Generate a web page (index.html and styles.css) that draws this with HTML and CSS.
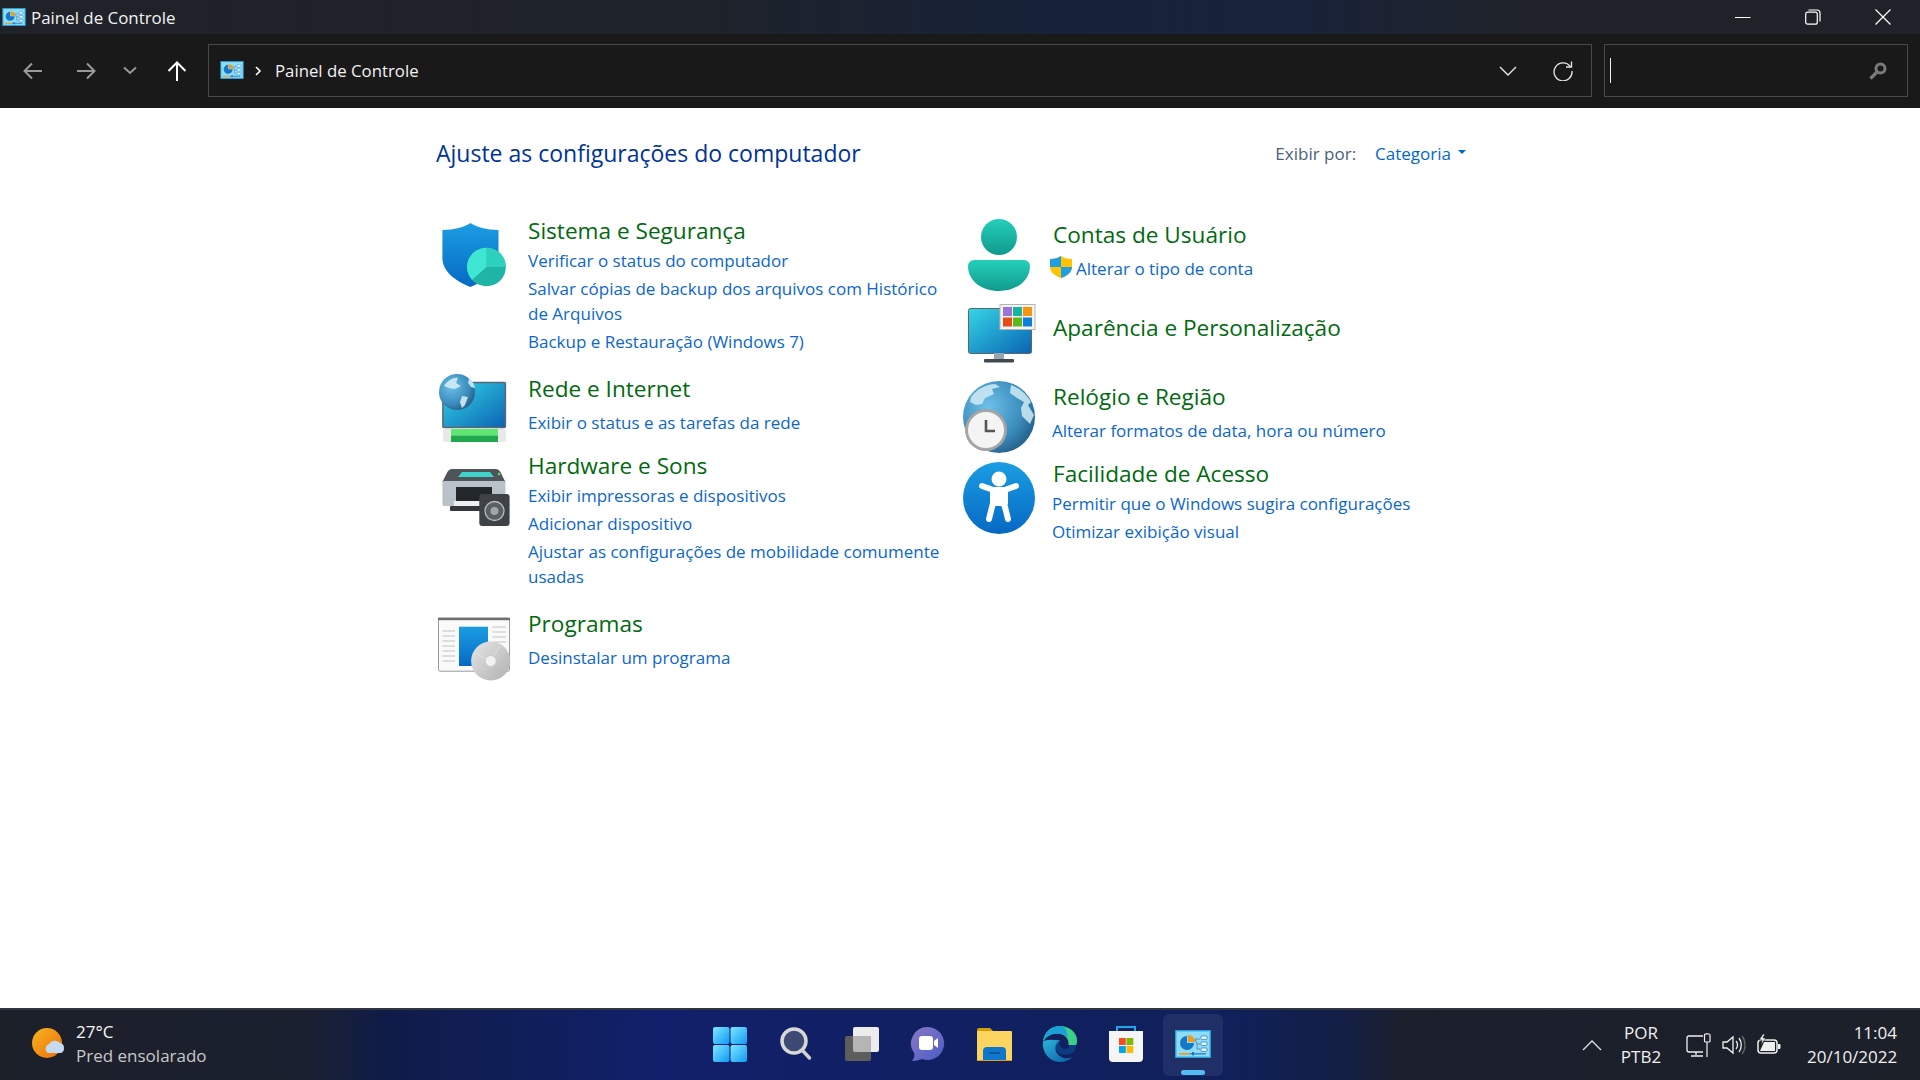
FILE: index.html
```html
<!DOCTYPE html>
<html lang="pt-BR">
<head>
<meta charset="utf-8">
<title>Painel de Controle</title>
<link rel="stylesheet" href="styles.css">
</head>
<body>
<svg class="defs" aria-hidden="true">
  <defs>
    <linearGradient id="blueV" x1="0" y1="0" x2="0" y2="1"><stop offset="0" stop-color="#1b9de2"/><stop offset="1" stop-color="#0669c4"/></linearGradient>
    <linearGradient id="screen" x1="0" y1="0" x2="1" y2="1"><stop offset="0" stop-color="#35d6e6"/><stop offset="1" stop-color="#0a63b4"/></linearGradient>
    <linearGradient id="teal" x1="0" y1="0" x2="0" y2="1"><stop offset="0" stop-color="#25d0bb"/><stop offset="1" stop-color="#0f9a8c"/></linearGradient>
    <radialGradient id="globe" cx=".35" cy=".35" r=".8"><stop offset="0" stop-color="#6cc0e8"/><stop offset=".6" stop-color="#3a8cbc"/><stop offset="1" stop-color="#1d4f78"/></radialGradient>
    <linearGradient id="cdg" x1="0" y1="0" x2="1" y2="1"><stop offset="0" stop-color="#e6e6e6"/><stop offset="1" stop-color="#b0b0b0"/></linearGradient>
    <linearGradient id="winG" x1="0" y1="0" x2="1" y2="1"><stop offset="0" stop-color="#7fe7ff"/><stop offset="1" stop-color="#0e9af5"/></linearGradient>
    <linearGradient id="chatG" x1="0" y1="0" x2="1" y2="1"><stop offset="0" stop-color="#8a78c8"/><stop offset="1" stop-color="#4a5cc4"/></linearGradient>
    <linearGradient id="edgeG" x1="0" y1="0" x2="1" y2="1"><stop offset="0" stop-color="#2ab6d8"/><stop offset="1" stop-color="#0d5aa8"/></linearGradient>
    <linearGradient id="sunG" x1="0" y1="0" x2="1" y2="1"><stop offset="0" stop-color="#f5b81f"/><stop offset="1" stop-color="#ee6c0c"/></linearGradient>
    <symbol id="cp" viewBox="0 0 36 28">
      <rect x=".5" y=".5" width="35" height="27" fill="#5cc8ef" stroke="#2b9fd8"/>
      <rect x="2" y="2" width="32" height="24" fill="#8edcf5"/>
      <path d="M13 12V5a7 7 0 0 1 7 7z" fill="#f09a1a"/>
      <path d="M12 6a7 7 0 1 0 7 7h-7z" fill="#1577c8"/>
      <path d="M20 9h5M20 9l2 5h3M22 14v5h3" fill="none" stroke="#4a7fa8" stroke-width=".8"/>
      <rect x="26" y="6" width="6" height="3.4" rx=".8" fill="#fff" stroke="#1f7fc8" stroke-width=".8"/>
      <rect x="26" y="12" width="6" height="3.4" rx=".8" fill="#fff" stroke="#1f7fc8" stroke-width=".8"/>
      <rect x="26" y="18" width="6" height="3.4" rx=".8" fill="#fff" stroke="#1f7fc8" stroke-width=".8"/>
      <rect x="4" y="23" width="11" height="1.6" fill="#f09a1a"/>
      <rect x="15" y="23" width="16" height="1.6" fill="#3a8fca"/>
      <rect x="17" y="22" width="2" height="3.4" fill="#1577c8"/>
    </symbol>
  </defs>
</svg>

<header class="titlebar">
  <svg class="tb-icon"><use href="#cp"/></svg>
  <span class="tb-title">Painel de Controle</span>
  <div class="win-controls">
    <svg class="wc" viewBox="0 0 16 16"><path d="M0 8.500h15.500" stroke="#fff" stroke-width="1" fill="none"/></svg>
    <svg class="wc" viewBox="0 0 16 16"><rect x=".7" y="3.200" width="11.600" height="12" rx="2" fill="none" stroke="#fff" stroke-width="1.200"/><path d="M3.500 1h8.500a3 3 0 0 1 3 3v8.500" fill="none" stroke="#fff" stroke-width="1.200"/></svg>
    <svg class="wc" viewBox="0 0 16 16"><path d="M.5.5l15 15M15.500.5l-15 15" stroke="#fff" stroke-width="1.200" fill="none"/></svg>
  </div>
</header>

<nav class="toolbar">
  <div class="nav-btns">
    <svg class="nav nav-back" viewBox="0 0 20 18"><path d="M19 9H2M9 1.500L1.500 9 9 16.500" fill="none" stroke="#9a9a9a" stroke-width="2"/></svg>
    <svg class="nav nav-fwd" viewBox="0 0 20 18"><path d="M1 9h17M11 1.500L18.500 9 11 16.500" fill="none" stroke="#9a9a9a" stroke-width="2"/></svg>
    <svg class="nav nav-more" viewBox="0 0 14 9"><path d="M1 1.500l6 5.500 6-5.500" fill="none" stroke="#9a9a9a" stroke-width="2"/></svg>
    <svg class="nav nav-up" viewBox="0 0 20 20"><path d="M10 20V2M1.500 10L10 1.500 18.500 10" fill="none" stroke="#fff" stroke-width="2"/></svg>
  </div>
  <div class="address">
    <svg class="addr-icon"><use href="#cp"/></svg>
    <svg class="addr-sep" viewBox="0 0 7 10"><path d="M1 1l4 4-4 4" fill="none" stroke="#fff" stroke-width="1.600"/></svg>
    <span class="addr-text">Painel de Controle</span>
    <svg class="addr-drop" viewBox="0 0 18 10"><path d="M1 1l8 8 8-8" fill="none" stroke="#e6e6e6" stroke-width="1.400"/></svg>
    <svg class="addr-refresh" viewBox="0 0 20 20"><path d="M17.300 5.500A9 9 0 1 0 19 10" fill="none" stroke="#e6e6e6" stroke-width="1.300"/><path d="M18.500 .5v5.500h-5.500" fill="none" stroke="#e6e6e6" stroke-width="1.300"/></svg>
  </div>
  <div class="search">
    <span class="caret"></span>
    <svg class="search-icon" viewBox="0 0 18 18"><circle cx="11.500" cy="6.500" r="4.500" fill="none" stroke="#7a7a7a" stroke-width="3"/><path d="M8 10l-6.500 6.500" stroke="#7a7a7a" stroke-width="3.200"/></svg>
  </div>
</nav>

<main class="content">
  <div class="head-row">
    <h1 class="page-title">Ajuste as configurações do computador</h1>
    <div class="view-by">
      <span class="view-label">Exibir por:</span>
      <a class="view-value">Categoria</a>
      <span class="view-arrow"></span>
    </div>
  </div>

  <div class="columns">
    <div class="col col-left">
      <section class="item h-sistema">
        <svg class="icon i-sistema" viewBox="0 0 72 72">
          <path d="M34.500 3c6 4 16 7 28 7v28c0 13-13 23-28 29C19 61 6.400 51 6.400 38V10c12 0 22-3 28.100-7z" fill="url(#blueV)"/>
          <circle cx="50.500" cy="47" r="19.300" fill="#1fb5a6"/>
          <path d="M50.500 47V27.700A19.300 19.300 0 0 1 69.800 47z" fill="#2dd0bc"/>
          <path d="M50.500 47V27.700A19.300 19.300 0 0 0 36 60z" fill="#40e6d4"/>
        </svg>
        <div class="body">
          <h2 class="title">Sistema e Segurança</h2>
          <a class="link">Verificar o status do computador</a>
          <a class="link">Salvar cópias de backup dos arquivos com Histórico de Arquivos</a>
          <a class="link">Backup e Restauração (Windows 7)</a>
        </div>
      </section>

      <section class="item h-rede">
        <svg class="icon i-rede" viewBox="0 0 72 72">
          <rect x="6.900" y="10.500" width="62.500" height="45" rx="1" fill="url(#screen)" stroke="#5b6670" stroke-width="1.500"/>
          <rect x="7" y="57" width="63" height="13" rx="2" fill="#e8e8e8"/>
          <rect x="15" y="57" width="47" height="6.500" fill="#5fe870"/>
          <rect x="15" y="63.500" width="47" height="6.500" fill="#1fa84c"/>
          <circle cx="21" cy="20" r="18" fill="url(#globe)"/>
          <path d="M8 14c4-6 10-9 14-8l-2 5 5 3-6 3-6-1zM26 24l6 1-3 8-3 3-2-6zM33 6c3 2 5 6 6 10l-4-1-3-4z" fill="#d3ebf5" opacity=".9"/>
        </svg>
        <div class="body">
          <h2 class="title">Rede e Internet</h2>
          <a class="link first-far">Exibir o status e as tarefas da rede</a>
        </div>
      </section>

      <section class="item h-hardware">
        <svg class="icon i-hardware" viewBox="0 0 72 72">
          <path d="M6.400 26l5-10a6 6 0 0 1 4-3h45a6 6 0 0 1 4 3l5 10z" fill="#4e5459"/>
          <path d="M22 21l4-5h28l4 5z" fill="#3fd4cc"/>
          <rect x="6.400" y="25" width="63" height="25" rx="2" fill="#b9c1c9"/>
          <circle cx="63" cy="18" r="1.300" fill="#4be07a"/>
          <rect x="20" y="31" width="36" height="14" fill="#23272b"/>
          <rect x="18" y="45" width="34" height="6" fill="#eceff1"/>
          <rect x="14" y="50" width="36" height="5" rx="1" fill="#33373b"/>
          <rect x="43.300" y="38" width="30.300" height="32" rx="3" fill="#3e4145"/>
          <circle cx="58.500" cy="55" r="9.500" fill="#5a5f64" stroke="#b5babd" stroke-width="1.300"/>
          <circle cx="58.500" cy="55" r="4" fill="#a0a6aa"/>
        </svg>
        <div class="body">
          <h2 class="title">Hardware e Sons</h2>
          <a class="link">Exibir impressoras e dispositivos</a>
          <a class="link">Adicionar dispositivo</a>
          <a class="link">Ajustar as configurações de mobilidade comumente usadas</a>
        </div>
      </section>

      <section class="item h-programas">
        <svg class="icon i-programas" viewBox="0 0 72 72">
          <rect x="2.500" y="5.200" width="71" height="53" rx="1.500" fill="#fafafa" stroke="#9a9a9a"/>
          <rect x="2" y="4.700" width="72" height="2.500" fill="#6f6f6f"/>
          <path d="M6.400 18h12.600M6.400 23h12.600M6.400 28h12.600M6.400 33h12.600M6.400 38h12.600M6.400 43h12.600M6.400 48h12.600M56.400 14h13.600M56.400 19h13.600M56.400 24h13.600M56.400 29h13.600" stroke="#c2c2c2" stroke-width="1"/>
          <rect x="23" y="13.700" width="29" height="39.300" fill="url(#blueV)"/>
          <circle cx="54.700" cy="48" r="19.600" fill="url(#cdg)"/>
          <circle cx="54.700" cy="48" r="5.500" fill="#f2f2f2" stroke="#c9c9c9"/>
          <path d="M39 40l11 6M64 33l-7 11" stroke="#e8d8f0" stroke-width="1"/>
        </svg>
        <div class="body">
          <h2 class="title">Programas</h2>
          <a class="link first-far">Desinstalar um programa</a>
        </div>
      </section>
    </div>

    <div class="col col-right">
      <section class="item h-contas">
        <svg class="icon i-contas" viewBox="0 0 72 72">
          <circle cx="36" cy="18" r="18" fill="url(#teal)"/>
          <path d="M11 41h50a6 6 0 0 1 6 6c0 15-14 25-31 25S5 62 5 47a6 6 0 0 1 6-6z" fill="url(#teal)"/>
        </svg>
        <div class="body">
          <h2 class="title">Contas de Usuário</h2>
          <a class="link first-far with-shield">
            <svg class="uac" viewBox="0 0 22 22">
              <path d="M11 0c3 2 6 3 11 3v8c0 5-5 9-11 11C5 20 0 16 0 11V3c5 0 8-1 11-3z" fill="#ffc400"/>
              <path d="M11 0c-3 2-6 3-11 3v8h11z" fill="#1e9fe4"/>
              <path d="M11 11h11c0 5-5 9-11 11z" fill="#1e9fe4"/>
            </svg>Alterar o tipo de conta</a>
        </div>
      </section>

      <section class="item h-aparencia">
        <svg class="icon i-aparencia" viewBox="0 0 72 72">
          <rect x="5.500" y="10.500" width="63" height="45" rx="2" fill="url(#screen)" stroke="#5b6670"/>
          <rect x="31" y="55" width="10" height="7" fill="#9aa4ab"/>
          <rect x="21" y="61" width="30" height="3.500" rx="1" fill="#3f4a52"/>
          <rect x="37" y="6.500" width="35" height="25" fill="#f4f4f4" stroke="#b5b5b5"/>
          <rect x="40" y="9" width="9" height="9" fill="#9b72d8"/>
          <rect x="50" y="9" width="9" height="9" fill="#17b3a3"/>
          <rect x="60" y="9" width="9" height="9" fill="#f59510"/>
          <rect x="40" y="19.500" width="9" height="9" fill="#e64c18"/>
          <rect x="50" y="19.500" width="9" height="9" fill="#5cb81a"/>
          <rect x="60" y="19.500" width="9" height="9" fill="#0c80d8"/>
        </svg>
        <div class="body">
          <h2 class="title">Aparência e Personalização</h2>
        </div>
      </section>

      <section class="item h-relogio">
        <svg class="icon i-relogio" viewBox="0 0 72 72">
          <circle cx="36" cy="36" r="36" fill="url(#globe)"/>
          <path d="M8 16c6-8 16-13 24-13l5 3-8 2 2 5-9 4-3 6-6 1-6-3zM48 4c8 3 16 9 20 17l-3 3 6 10-4 9-8-8-1-8 3-6-7-4-7-5z" fill="#d0ebf5" opacity=".85"/>
          <circle cx="23" cy="49" r="21" fill="#a5a5a5"/>
          <circle cx="23" cy="49" r="18" fill="#f4f4f4"/>
          <path d="M23 39v11h9" fill="none" stroke="#555" stroke-width="2.600"/>
        </svg>
        <div class="body">
          <h2 class="title">Relógio e Região</h2>
          <a class="link first-far">Alterar formatos de data, hora ou número</a>
        </div>
      </section>

      <section class="item h-facilidade">
        <svg class="icon i-facilidade" viewBox="0 0 72 72">
          <circle cx="36" cy="36" r="36" fill="url(#blueV)"/>
          <circle cx="36" cy="17" r="7.500" fill="#fff"/>
          <path d="M19 24l17 6 17-6" fill="none" stroke="#fff" stroke-width="6" stroke-linecap="round" stroke-linejoin="round"/>
          <path d="M30 28h12v13l-1 0 4 16M30 28v13l-4 16" fill="#fff" stroke="#fff" stroke-width="6" stroke-linecap="round" stroke-linejoin="round"/>
          <rect x="30" y="28" width="12" height="16" fill="#fff"/>
        </svg>
        <div class="body">
          <h2 class="title">Facilidade de Acesso</h2>
          <a class="link">Permitir que o Windows sugira configurações</a>
          <a class="link">Otimizar exibição visual</a>
        </div>
      </section>
    </div>
  </div>
</main>

<footer class="taskbar">
  <div class="weather">
    <svg class="sun" viewBox="0 0 34 32">
      <circle cx="15" cy="15" r="15" fill="url(#sunG)"/>
      <path d="M16 25a5 5 0 0 1 1-9 7 7 0 0 1 11-1 5 5 0 0 1 4 5 5 5 0 0 1-3 5z" fill="#c5d9f0"/>
    </svg>
    <div class="weather-text">
      <div class="temp">27°C</div>
      <div class="cond">Pred ensolarado</div>
    </div>
  </div>
  <div class="apps">
    <div class="app"><svg class="ico" viewBox="0 0 34 36">
      <rect x="0" y="1" width="16.500" height="17" rx="2" fill="url(#winG)"/><rect x="17.500" y="1" width="16.500" height="17" rx="2" fill="url(#winG)"/>
      <rect x="0" y="19" width="16.500" height="17" rx="2" fill="url(#winG)"/><rect x="17.500" y="19" width="16.500" height="17" rx="2" fill="url(#winG)"/></svg></div>
    <div class="app"><svg class="ico" viewBox="0 0 34 36">
      <circle cx="15" cy="15" r="12" fill="#3e4a74" stroke="#d8d8d8" stroke-width="3.500"/><path d="M23.500 24.500l7 7.500" stroke="#d0d0d0" stroke-width="3.500" stroke-linecap="round"/></svg></div>
    <div class="app"><svg class="ico" viewBox="0 0 36 36">
      <rect x="9" y="1" width="26" height="25" rx="2" fill="#ececec"/>
      <rect x="1" y="10" width="26" height="25" rx="2" fill="#5d5d5d"/>
      <path d="M9 10h18v16H11a2 2 0 0 1-2-2z" fill="#b5b5b5"/></svg></div>
    <div class="app"><svg class="ico" viewBox="0 0 34 36">
      <path d="M17 1a16.500 16.500 0 1 1-6 32c-3 1-6 2-10 2 2-3 3-5 2-8A16.500 16.500 0 0 1 17 1z" fill="url(#chatG)"/>
      <rect x="8" y="10" width="14" height="14" rx="3" fill="#fff"/><path d="M23 15l4-3v10l-4-3z" fill="#fff"/></svg></div>
    <div class="app"><svg class="ico" viewBox="0 0 36 36">
      <path d="M1 4a2 2 0 0 1 2-2h11l4 4H1z" fill="#d89c08"/>
      <rect x="1" y="5" width="35" height="30" rx="1" fill="#fcd561"/>
      <path d="M7 35V25a4 4 0 0 1 4-4h15a4 4 0 0 1 4 4v10z" fill="#0f78cc"/>
      <path d="M13 27h11" stroke="#0a4f90" stroke-width="1.500"/>
      <path d="M1 34h35v1H1z" fill="#e0a010"/></svg></div>
    <div class="app"><svg class="ico" viewBox="0 0 36 38">
      <path d="M18 0C8 0 1 7 0 17c3-6 9-9 15-9 8 0 13 6 12 12h8c1-2 1-3 1-5C36 7 28 0 18 0z" fill="#3ccf8a"/>
      <path d="M18 0C8 0 1 7 0 17c3-6 9-9 15-9 5 0 9 2 11 5C26 5 23 0 18 0z" fill="#1a9fd8"/>
      <path d="M0 17c-1 11 7 21 18 21 5 0 10-2 13-5-6 2-13 1-16-4-3-4-2-9 2-12 1-1 1-2 0-2C9 14 2 14 0 17z" fill="url(#edgeG)"/>
      <path d="M17 15c-4 3-5 8-2 12 3 4 10 4 15 2 4-2 5-5 5-9h-7c0 3-2 4-5 4-4 0-6-4-6-9z" fill="#0c4f98" opacity=".6"/></svg></div>
    <div class="app"><svg class="ico" viewBox="0 0 34 36">
      <path d="M8 6V1h18v5" fill="none" stroke="#1aa8e8" stroke-width="2"/>
      <path d="M0 5h34v27a4 4 0 0 1-4 4H4a4 4 0 0 1-4-4z" fill="#f5f5f5"/>
      <rect x="10" y="12" width="6.800" height="7" fill="#f25022"/><rect x="17.500" y="12" width="6.800" height="7" fill="#7fba00"/>
      <rect x="10" y="20" width="6.800" height="7" fill="#00a4ef"/><rect x="17.500" y="20" width="6.800" height="7" fill="#ffb900"/></svg></div>
    <div class="app app-active"><svg class="ico ico-cp"><use href="#cp"/></svg><span class="indicator"></span></div>
  </div>
  <div class="tray">
    <svg class="up-chev" viewBox="0 0 20 11"><path d="M1 10l9-9 9 9" fill="none" stroke="#e0e0e0" stroke-width="1.300"/></svg>
    <div class="lang"><div>POR</div><div>PTB2</div></div>
    <div class="tray-icons">
      <svg class="ti ti-net" viewBox="0 0 25 25"><path d="M17 3H3a2 2 0 0 0-2 2v12a2 2 0 0 0 2 2h14M10 19v3M5 23h12" fill="none" stroke="#f0f0f0" stroke-width="1.300"/><rect x="18.500" y="1" width="5.500" height="8" rx="1" fill="none" stroke="#f0f0f0" stroke-width="1.200"/><path d="M21 0v1M21 9v15" stroke="#f0f0f0" stroke-width="1.200"/></svg>
      <svg class="ti ti-vol" viewBox="0 0 24 20"><path d="M1 7h4l6-5v16l-6-5H1z" fill="none" stroke="#f0f0f0" stroke-width="1.300"/><path d="M14 6c2 2 2 6 0 8" fill="none" stroke="#f0f0f0" stroke-width="1.300"/><path d="M17 3c3 4 3 10 0 14" fill="none" stroke="#f0f0f0" stroke-width="1.300"/><path d="M20 1c4 5 4 13 0 18" fill="none" stroke="#666" stroke-width="1.300"/></svg>
      <svg class="ti ti-bat" viewBox="0 0 24 20"><rect x="1" y="6" width="19" height="13" rx="3" fill="none" stroke="#f0f0f0" stroke-width="1.500"/><path d="M21 10h1.500a1 1 0 0 1 1 1v3a1 1 0 0 1-1 1H21z" fill="#f0f0f0"/><path d="M3 17l4-9h11v9z" fill="#f0f0f0"/><path d="M6 0L2 6h3l-1 5 5-7H6l2-4z" fill="#f0f0f0" stroke="#1c2029" stroke-width=".7"/></svg>
    </div>
    <div class="clock"><div>11:04</div><div>20/10/2022</div></div>
  </div>
</footer>
</body>
</html>
```
FILE: styles.css
```css
* { box-sizing: border-box; }
html, body { margin: 0; padding: 0; }
body {
  width: 1920px;
  height: 1080px;
  display: flex;
  flex-direction: column;
  overflow: hidden;
  font-family: "Open Sans", "Noto Sans", sans-serif;
  background: #fff;
}
.defs { display: block; width: 0; height: 0; overflow: hidden; }

/* title bar */
.titlebar {
  height: 34px;
  flex: none;
  display: flex;
  align-items: center;
  padding-left: 2px;
  background: linear-gradient(90deg, #1f2228 0%, #1e2229 36%, #172238 54%, #182238 68%, #1f2228 80%);
}
.tb-icon { width: 24px; height: 18px; margin-top: -1px; }
.tb-title { margin-left: 5px; font-size: 16.900px; color: #f2f2f2; }
.win-controls { margin-left: auto; display: flex; align-items: center; padding-right: 29px; gap: 54px; }
.wc { width: 16px; height: 16px; display: block; }

/* toolbar */
.toolbar {
  height: 74px;
  flex: none;
  background: #191919;
  display: flex;
  padding: 10px 12px 11px 0;
}
.nav-btns { width: 208px; display: flex; align-items: center; padding-left: 23px; }
.nav { display: block; flex: none; }
.nav-back { width: 20px; height: 18px; }
.nav-fwd { width: 20px; height: 18px; margin-left: 33px; }
.nav-more { width: 14px; height: 9px; margin-left: 27px; }
.nav-up { width: 20px; height: 20px; margin-left: 30px; }
.address {
  width: 1384px;
  border: 1px solid #4a4a4a;
  display: flex;
  align-items: center;
  padding-left: 11px;
}
.addr-icon { width: 24px; height: 18px; flex: none; margin-top: -2px; }
.addr-sep { width: 7px; height: 10px; margin-left: 11px; flex: none; }
.addr-text { margin-left: 13px; font-size: 16.800px; color: #f2f2f2; }
.addr-drop { width: 18px; height: 10px; margin-left: auto; flex: none; }
.addr-refresh { width: 20px; height: 20px; margin: 0 18px 0 36px; flex: none; }
.search {
  margin-left: 12px;
  flex: 1;
  border: 1px solid #4a4a4a;
  display: flex;
  align-items: center;
  padding-left: 5px;
  padding-right: 20px;
  justify-content: space-between;
}
.caret { width: 1px; height: 25px; background: #f2f2f2; }
.search-icon { width: 18px; height: 18px; }

/* content */
.content {
  flex: 1;
  padding-left: 436px;
  color: #06c;
}
.head-row {
  width: 1030px;
  height: 48px;
  margin-top: 21px;
  display: flex;
  align-items: center;
  justify-content: space-between;
}
.page-title {
  margin: 0;
  font-size: 23px;
  font-weight: 400;
  color: #003399;
}
.view-by { display: flex; align-items: center; font-size: 17px; }
.view-label { color: #4c607a; }
.view-value { margin-left: 19px; color: #06c; }
.view-arrow {
  margin-left: 7px;
  margin-top: -3px;
  border-left: 4px solid transparent;
  border-right: 4px solid transparent;
  border-top: 4px solid #06c;
}
.columns { display: flex; margin-top: 39px; }
.col-left { width: 525px; }
.col-right { padding-top: 4px; }

.item { display: flex; }
.icon { width: 72px; height: 72px; flex: none; display: block; overflow: visible; }
.body { flex: none; }
.col-left .body { width: 420px; margin-left: 20px; }
.col-right .body { width: 440px; margin-left: 20px; }
.title {
  margin: 0 0 -1px;
  font-size: 22.600px;
  font-weight: 400;
  line-height: 30px;
  color: #006a0f;
}
.link {
  display: block;
  font-size: 17px;
  line-height: 25px;
  margin-top: 3px;
  color: #0b66cf;
}
.first-far { margin-top: 7px; }
.col-right .link { margin-left: -1px; }

/* explicit row rhythm, as in the shell's category view */
.h-sistema { height: 158px; }
.h-rede { height: 77px; }
.h-hardware { height: 158px; }
.h-programas { height: 76px; }
.h-contas { height: 93px; }
.h-aparencia { height: 69px; }
.h-relogio { height: 77px; }
.h-facilidade { height: 90px; }

.i-sistema { margin-top: 4px; }
.i-rede { margin-top: -2px; }
.i-hardware { margin-top: 5px; }
.i-programas { margin-top: 4px; }
.i-contas { margin-top: -1px; margin-left: 2px; margin-right: -2px; }
.i-aparencia { margin-top: -15px; margin-left: 2px; margin-right: -2px; }
.i-relogio { margin-top: -1px; margin-left: 2px; margin-right: -2px; }
.i-facilidade { margin-top: 3px; margin-left: 2px; margin-right: -2px; }

.col-right .with-shield { display: flex; align-items: center; margin-left: -3px; }
.uac { width: 22px; height: 22px; margin-right: 4px; flex: none; margin-top: -3px; }

/* taskbar */
.taskbar {
  height: 72px;
  flex: none;
  display: flex;
  align-items: stretch;
  border-top: 2px solid #31353f;
  background: linear-gradient(90deg, #1c2029 0%, #1b2030 16%, #0f1c48 20%, #11206a 34%, #10205a 64%, #131f45 70%, #1b1f2c 73%, #1c2029 100%);
  color: #fff;
}
.weather { width: 697px; display: flex; align-items: center; padding: 0 0 2px 32px; }
.sun { width: 34px; height: 32px; flex: none; }
.weather-text { margin-left: 10px; font-size: 17px; line-height: 24px; }
.temp { color: #f6f6f6; }
.cond { color: #c8c8c8; }
.apps { display: flex; }
.app {
  width: 66px;
  display: flex;
  align-items: center;
  justify-content: center;
  padding-bottom: 2px;
  margin-bottom: 4px;
  margin-top: 4px;
}
.ico { width: 36px; height: 36px; display: block; }
.app-active { background: rgba(255,255,255,.07); border-radius: 6px; width: 60px; margin-left: 4px; position: relative; }
.ico-cp { width: 36px; height: 28px; }
.indicator {
  position: absolute;
  left: 18px;
  bottom: 1px;
  width: 24px;
  height: 5px;
  border-radius: 3px;
  background: #55bdf6;
}
.tray { margin-left: auto; display: flex; align-items: center; padding-right: 23px; font-size: 17px; }
.up-chev { width: 20px; height: 11px; margin-right: 14px; }
.lang { text-align: center; line-height: 24px; color: #f0f0f0; width: 50px; }
.tray-icons { display: flex; align-items: center; margin-left: 20px; }
.ti { display: block; flex: none; }
.ti-net { width: 25px; height: 25px; }
.ti-vol { width: 24px; height: 20px; margin-left: 11px; }
.ti-bat { width: 24px; height: 20px; margin-left: 11px; margin-top: -2px; }
.clock { margin-left: 26px; text-align: right; line-height: 24px; color: #f0f0f0; width: 90px; white-space: nowrap; }
```
